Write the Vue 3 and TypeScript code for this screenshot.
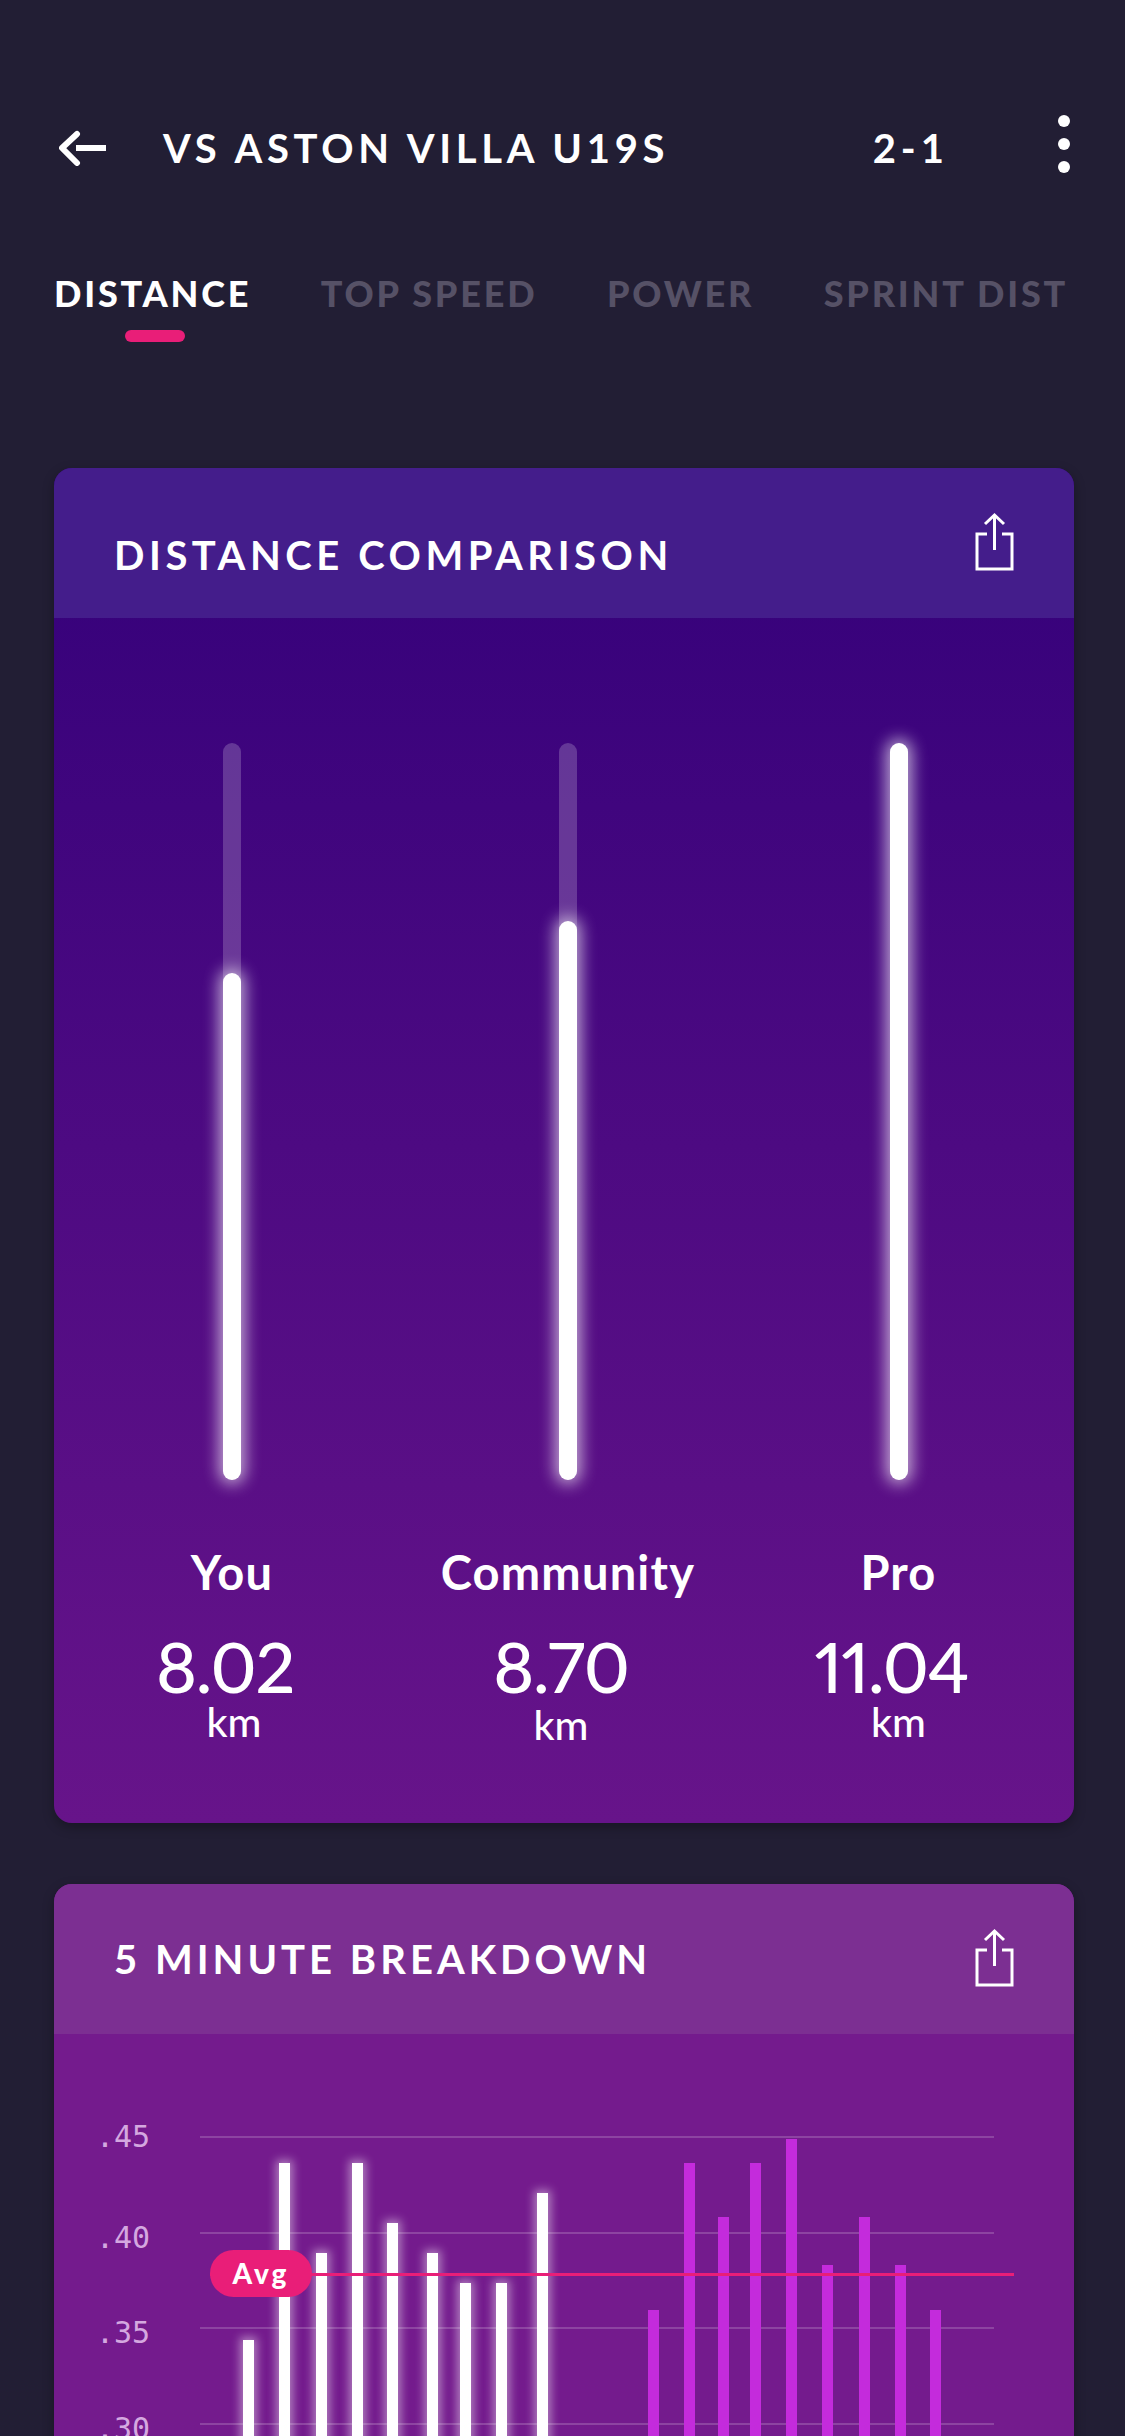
<script setup lang="ts">
const tabs = ['DISTANCE', 'TOP SPEED', 'POWER', 'SPRINT DIST'];

const comparison = [
  { name: 'You', value: '8.02', top: 230, cls: 'you' },
  { name: 'Community', value: '8.70', top: 178, cls: 'community' },
  { name: 'Pro', value: '11.04', top: 0, cls: 'pro' },
];

const ticks = ['.45', '.40', '.35', '.30', '.25', '.20'];

// left edge and top edge of each bar, measured from the chart's origin
const whiteBars = [
  [189, 204], [225, 27], [262, 117], [298, 27], [333, 87],
  [373, 117], [406, 147], [442, 147], [483, 57],
];
const pinkBars = [
  [594, 174], [630, 27], [664, 81], [696, 27], [732, 3],
  [768, 129], [805, 81], [841, 129], [876, 174],
];

function barStyle(bar: number[]) {
  return { left: `${bar[0]}px`, top: `${bar[1]}px` };
}
</script>

<template>
  <div class="screen">
    <header class="topbar">
      <svg class="back" width="48" height="36" viewBox="0 0 48 36">
        <path d="M18 4 3 18l15 15" fill="none" stroke="#fff" stroke-width="6" stroke-linecap="round" stroke-linejoin="round" />
        <path d="M17 18h30" fill="none" stroke="#fff" stroke-width="6" />
      </svg>
      <h1 class="match">VS ASTON VILLA U19S</h1>
      <span class="score">2-1</span>
      <div class="dots"><i></i><i></i><i></i></div>
    </header>

    <nav class="tabs">
      <a v-for="(tab, i) in tabs" :key="tab" :class="{ active: i === 0 }">{{ tab }}</a>
    </nav>

    <section class="card first">
      <div class="card-head">
        <h2 class="low">DISTANCE COMPARISON</h2>
        <svg class="share" width="40" height="60" viewBox="0 0 40 60">
          <path d="M12 22H2v35h35V22H27M19.500 38V3M10 12l9.500-9 9.500 9" fill="none" stroke="#fff" stroke-width="3" />
        </svg>
      </div>
      <div class="compare">
        <div class="cols">
          <div v-for="c in comparison" :key="c.name" class="col">
            <div class="track">
              <div class="fill" :style="{ top: `${c.top}px` }"></div>
            </div>
          </div>
        </div>
        <div class="cols">
          <div v-for="c in comparison" :key="c.name" class="stat" :class="c.cls">
            <div class="who">{{ c.name }}</div>
            <div class="num">{{ c.value }}</div>
            <div class="km">km</div>
          </div>
        </div>
      </div>
    </section>

    <section class="card second">
      <div class="card-head">
        <h2>5 MINUTE BREAKDOWN</h2>
        <svg class="share" width="40" height="60" viewBox="0 0 40 60">
          <path d="M12 22H2v35h35V22H27M19.500 38V3M10 12l9.500-9 9.500 9" fill="none" stroke="#fff" stroke-width="3" />
        </svg>
      </div>
      <div class="breakdown">
        <div class="chart">
          <div v-for="t in ticks" :key="t" class="tick">
            <span class="tick-label">{{ t }}</span>
            <span class="tick-line"></span>
          </div>
          <span v-for="(b, i) in whiteBars" :key="'w' + i" class="bar white" :style="barStyle(b)"></span>
          <span v-for="(b, i) in pinkBars" :key="'p' + i" class="bar pink" :style="barStyle(b)"></span>
          <div class="avg-line"></div>
          <div class="avg-pill">Avg</div>
        </div>
      </div>
    </section>
  </div>
</template>

<style scoped>
.screen {
  height: 2436px;
  overflow: hidden;
  box-sizing: border-box;
  padding: 0 51px 0 54px;
  background: #221e34;
  color: #fff;
  font-family: Lato, "Open Sans", sans-serif;
}
.topbar {
  display: flex;
  align-items: center;
  height: 60px;
  padding-top: 118px;
}
.back {
  margin-left: 5px;
  flex: none;
}
.match {
  margin: 0 0 0 56px;
  font-size: 40px;
  font-weight: 700;
  letter-spacing: 4.7px;
  white-space: nowrap;
}
.score {
  margin-left: auto;
  font-size: 40px;
  font-weight: 700;
  letter-spacing: 5px;
}
.dots {
  display: flex;
  flex-direction: column;
  gap: 11px;
  margin: -8px 4px 0 109px;
}
.dots i {
  width: 12px;
  height: 12px;
  border-radius: 50%;
  background: #fff;
}
.tabs {
  display: flex;
  gap: 69.500px;
  margin-top: 90px;
  white-space: nowrap;
  font-size: 36px;
  font-weight: 900;
  letter-spacing: 2.8px;
  line-height: 50px;
}
.tabs a {
  position: relative;
  color: #565166;
}
.tabs a.active {
  color: #fff;
}
.tabs a.active::after {
  content: "";
  position: absolute;
  left: 71px;
  top: 62px;
  width: 60px;
  height: 12px;
  border-radius: 6px;
  background: #e91e78;
}
.card {
  width: 1020px;
  border-radius: 18px;
  overflow: hidden;
  box-shadow: 0 4px 12px rgba(0, 0, 0, 0.3);
}
.first {
  margin-top: 150px;
  height: 1355px;
  background: linear-gradient(#33007a, #67148a);
}
.second {
  margin-top: 61px;
  background: #741b8d;
}
.card-head {
  display: flex;
  align-items: center;
  justify-content: space-between;
  height: 150px;
  box-sizing: border-box;
  padding: 0 59px 0 60px;
}
.first .card-head {
  background: #441d8b;
}
.second .card-head {
  background: #7c2f92;
}
.card-head h2 {
  margin: 0;
  font-size: 40px;
  font-weight: 700;
  letter-spacing: 4px;
}
.card-head h2.low {
  padding-top: 24px;
  letter-spacing: 4.550px;
}
.share {
  flex: none;
  margin-bottom: 2px;
}
.compare {
  padding: 125px 0 0 11px;
}
.cols {
  display: grid;
  grid-template-columns: 334px 338px 323px;
}
.col {
  display: flex;
  justify-content: center;
}
.track {
  position: relative;
  width: 18px;
  height: 737px;
  border-radius: 9px;
  background: rgba(255, 255, 255, 0.2);
}
.fill {
  position: absolute;
  inset: 0;
  border-radius: 9px;
  background: #fff;
  box-shadow: 0 0 16px 4px rgba(255, 255, 255, 0.65);
}
.stat {
  margin-top: 64px;
  text-align: center;
}
.who {
  font-size: 47px;
  font-weight: 700;
  letter-spacing: 1.2px;
  line-height: 56px;
}
.num {
  margin: 28px 14px 0 0;
  font-size: 70px;
  font-weight: 500;
  font-variant-numeric: proportional-nums;
  letter-spacing: -1.200px;
  line-height: 76px;
}
.km {
  margin-top: -4px;
  font-size: 41px;
  font-weight: 500;
  line-height: 44px;
}
.you .km {
  margin-left: 4px;
}
.community .km {
  margin: -1px 14px 0 0;
}
.breakdown {
  padding-top: 102px;
}
.chart {
  position: relative;
}
.tick {
  display: flex;
  height: 95.700px;
}
.tick-label {
  width: 104px;
  margin-left: 42px;
  margin-top: -9px;
  line-height: 30px;
  height: 30px;
  font-family: "DejaVu Sans Mono", monospace;
  font-size: 30px;
  color: #d4a8e0;
}
.tick:first-child .tick-label {
  margin-top: -14px;
}
.tick-line {
  flex: 1;
  height: 2px;
  margin-right: 80px;
  background: rgba(255, 255, 255, 0.18);
}
.bar {
  position: absolute;
  bottom: 0;
  width: 11px;
}
.white {
  background: #fff;
  box-shadow: 0 0 10px 3px rgba(255, 255, 255, 0.45);
}
.pink {
  background: #c42bdc;
}
.avg-line {
  position: absolute;
  left: 156px;
  top: 137px;
  width: 804px;
  height: 3px;
  background: #e91e78;
}
.avg-pill {
  position: absolute;
  left: 156px;
  top: 114px;
  width: 102px;
  height: 47px;
  border-radius: 24px;
  background: #e91e78;
  text-align: center;
  font-size: 28px;
  font-weight: 900;
  letter-spacing: 3px;
  line-height: 46px;
}
</style>
